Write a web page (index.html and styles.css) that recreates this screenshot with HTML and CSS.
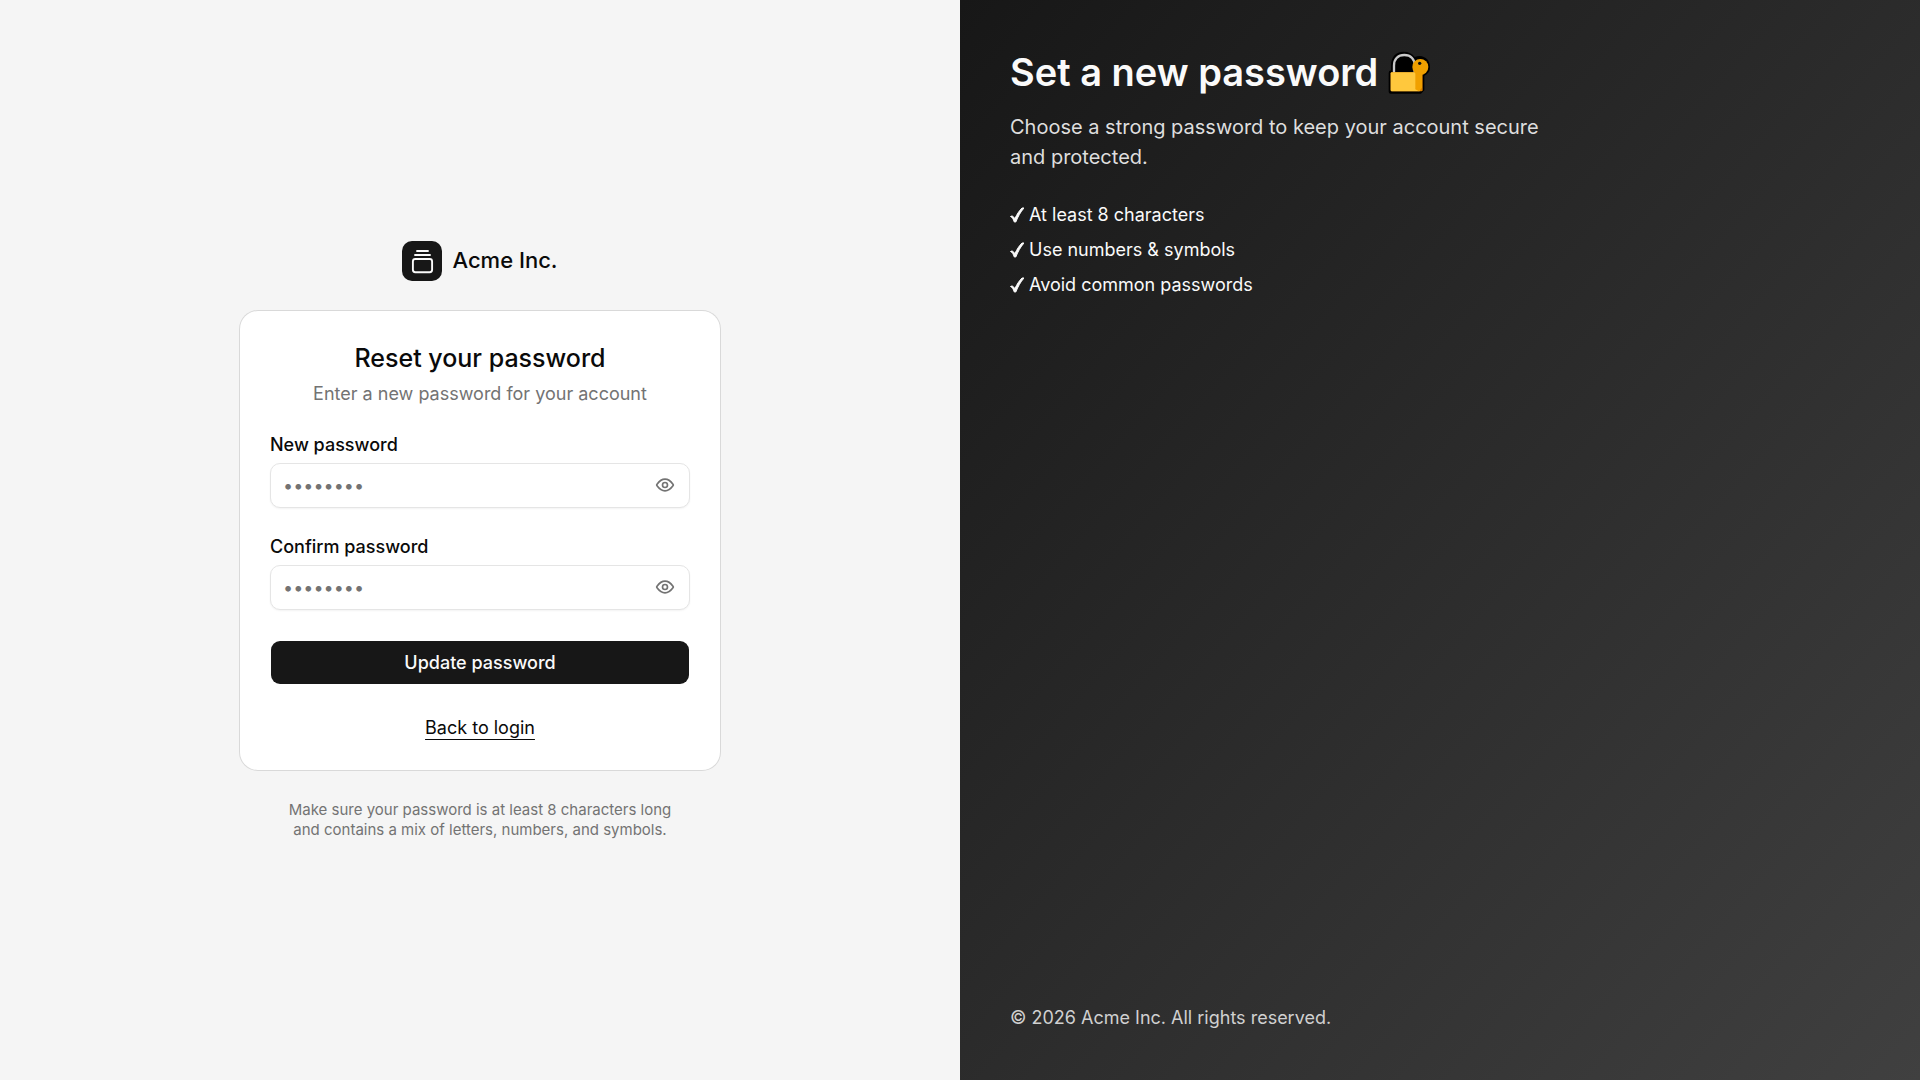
FILE: index.html
```html
<!DOCTYPE html>
<html lang="en">
<head>
    <meta charset="UTF-8">
    <meta name="viewport" content="width=device-width, initial-scale=1.0">
    <title>Reset your password - Acme Inc.</title>
    <link rel="stylesheet" href="styles.css">
</head>
<body>
    <div class="page">
        <main class="form-side">
            <div class="container">
                <a href="#" class="brand">
                    <svg class="brand-logo" viewBox="0 0 40 40" aria-hidden="true">
                        <rect width="40" height="40" rx="10" fill="#171717"/>
                        <g fill="none" stroke="#fafafa" stroke-width="1.9" stroke-linecap="round">
                            <path d="M15 10h11"/>
                            <path d="M13 14h15"/>
                            <rect x="10.9" y="18" width="19.2" height="13.2" rx="2.4"/>
                        </g>
                    </svg>
                    Acme Inc.
                </a>

                <div class="card">
                    <div class="card-header">
                        <h1>Reset your password</h1>
                        <p>Enter a new password for your account</p>
                    </div>
                    <form id="reset-form">
                        <div class="field">
                            <label for="password">New password</label>
                            <div class="input-wrap">
                                <input type="password" id="password" placeholder="••••••••">
                                <button type="button" class="toggle" aria-label="Show password">
                                    <svg viewBox="0 0 24 24" aria-hidden="true">
                                        <path d="M21.544 11.045C21.848 11.471 22 11.685 22 12C22 12.316 21.848 12.529 21.544 12.955C20.178 14.871 16.689 19 12 19C7.311 19 3.822 14.871 2.456 12.955C2.152 12.529 2 12.316 2 12C2 11.685 2.152 11.471 2.456 11.045C3.822 9.129 7.311 5 12 5C16.689 5 20.178 9.129 21.544 11.045Z"/>
                                        <circle cx="12" cy="12" r="3"/>
                                    </svg>
                                </button>
                            </div>
                        </div>
                        <div class="field">
                            <label for="confirm">Confirm password</label>
                            <div class="input-wrap">
                                <input type="password" id="confirm" placeholder="••••••••">
                                <button type="button" class="toggle" aria-label="Show password">
                                    <svg viewBox="0 0 24 24" aria-hidden="true">
                                        <path d="M21.544 11.045C21.848 11.471 22 11.685 22 12C22 12.316 21.848 12.529 21.544 12.955C20.178 14.871 16.689 19 12 19C7.311 19 3.822 14.871 2.456 12.955C2.152 12.529 2 12.316 2 12C2 11.685 2.152 11.471 2.456 11.045C3.822 9.129 7.311 5 12 5C16.689 5 20.178 9.129 21.544 11.045Z"/>
                                        <circle cx="12" cy="12" r="3"/>
                                    </svg>
                                </button>
                            </div>
                        </div>
                        <button type="submit" class="submit">Update password</button>
                        <a href="#" class="back">Back to login</a>
                    </form>
                </div>

                <p class="hint">Make sure your password is at least 8 characters long and contains a mix of letters, numbers, and symbols.</p>
            </div>
        </main>

        <aside class="info-side">
            <div>
                <h2>
                    Set a new password
                    <svg class="lock" viewBox="52 34 129 129" aria-hidden="true">
                        <path d="M54 100q0-7 7-8V78C61 50 77 36 98 36c16 0 27 6 34 16 26-10 47 8 46 31 0 13-7 20-17 25v44l-10 10H60q-6 0-6-6z" fill="#000"/>
                        <path d="M70 100V78C70 58 82 46 101 46S132 58 132 78v22" fill="none" stroke="#c8c8c8" stroke-width="7"/>
                        <rect x="60" y="98" width="96" height="57" rx="4" fill="#d67d00"/>
                        <path d="M63 98h84v57H63q-3 0-3-3v-51q0-3 3-3z" fill="#ffc83d"/>
                        <path d="M134 98h20v46l-9 11-11-6z" fill="#f0a000"/>
                        <circle cx="149" cy="82" r="24" fill="#f0a000"/>
                        <circle cx="147" cy="71" r="5" fill="#111"/>
                    </svg>
                </h2>
                <p class="lead">Choose a strong password to keep your account secure and protected.</p>
                <ul>
                    <li><svg class="check" viewBox="0 0 14 16" aria-hidden="true"><path d="M0.5 9.5C2 8.600 3.500 9 4.800 11.800C7 7 9.500 3.500 12 1L14 1C10.500 5 8 9.500 5.800 15L4.300 15C3.300 12 2.200 10.200 0.500 9.500Z"/></svg>At least 8 characters</li>
                    <li><svg class="check" viewBox="0 0 14 16" aria-hidden="true"><path d="M0.5 9.5C2 8.600 3.500 9 4.800 11.800C7 7 9.500 3.500 12 1L14 1C10.500 5 8 9.500 5.800 15L4.300 15C3.300 12 2.200 10.200 0.500 9.500Z"/></svg>Use numbers &amp; symbols</li>
                    <li><svg class="check" viewBox="0 0 14 16" aria-hidden="true"><path d="M0.5 9.5C2 8.600 3.500 9 4.800 11.800C7 7 9.500 3.500 12 1L14 1C10.500 5 8 9.500 5.800 15L4.300 15C3.300 12 2.200 10.200 0.500 9.500Z"/></svg>Avoid common passwords</li>
                </ul>
            </div>
            <p class="copyright">© 2026 Acme Inc. All rights reserved.</p>
        </aside>
    </div>
</body>
</html>
```

FILE: styles.css
```css
* {
    box-sizing: border-box;
    margin: 0;
    padding: 0;
}
body {
    font-family: Inter, 'Liberation Sans', sans-serif;
    font-size: 18px;
    line-height: 25px;
    color: #0a0a0a;
}
.page {
    display: grid;
    grid-template-columns: 1fr 1fr;
    min-height: 100vh;
}
a {
    color: inherit;
    text-decoration: none;
}
button, input {
    font: inherit;
}

/* left side */
.form-side {
    display: flex;
    align-items: center;
    justify-content: center;
    padding: 30px;
    background-color: #f5f5f5;
}
.container {
    display: flex;
    flex-direction: column;
    gap: 30px;
    width: 100%;
    max-width: 480px;
}
.brand {
    display: flex;
    align-items: center;
    align-self: center;
    gap: 10px;
    font-size: 22px;
    font-weight: 500;
}
.brand-logo {
    width: 40px;
    height: 40px;
}
.card {
    padding: 30px;
    background-color: #fff;
    border-radius: 18px;
    box-shadow: 0 0 0 1px #d9d9d9;
}
.card-header {
    margin-bottom: 30px;
    text-align: center;
}
h1 {
    margin-bottom: 5px;
    font-size: 25px;
    font-weight: 500;
    line-height: 35px;
}
.card-header p {
    color: #737373;
}
form {
    display: flex;
    flex-direction: column;
    gap: 30px;
}
.field {
    display: flex;
    flex-direction: column;
    gap: 10px;
}
label {
    font-weight: 500;
    line-height: 17px;
}
.input-wrap {
    position: relative;
}
input {
    display: block;
    width: 100%;
    height: 45px;
    padding: 0 50px 0 12px;
    border: 1px solid #e5e5e5;
    border-radius: 10px;
    background-color: #fff;
    box-shadow: 0 1px 2px rgba(0, 0, 0, 0.05);
}
input::placeholder {
    color: #737373;
}
.toggle {
    position: absolute;
    top: 0;
    right: 0;
    display: flex;
    align-items: center;
    justify-content: center;
    width: 50px;
    height: 45px;
    border: none;
    background: none;
    color: #737373;
    cursor: pointer;
}
.toggle svg {
    width: 20px;
    height: 20px;
    fill: none;
    stroke: currentColor;
    stroke-width: 2;
}
.submit {
    height: 45px;
    border: 1px solid transparent;
    border-radius: 10px;
    background-color: #171717;
    background-clip: padding-box;
    color: #fafafa;
    font-weight: 500;
    cursor: pointer;
}
.submit:hover {
    background-color: #333;
}
.back {
    align-self: center;
    text-decoration: underline;
    text-decoration-thickness: 1px;
    text-underline-offset: 5px;
}
.hint {
    padding: 0 40px;
    font-size: 15px;
    line-height: 20px;
    text-align: center;
    color: #737373;
}

/* right side */
.info-side {
    display: flex;
    flex-direction: column;
    justify-content: space-between;
    padding: 50px;
    background: linear-gradient(to bottom right, #171717, #404040);
    color: #fafafa;
}
h2 {
    display: flex;
    align-items: center;
    gap: 10px;
    margin-bottom: 17px;
    font-size: 38px;
    font-weight: 600;
    line-height: 45px;
}
.lock {
    width: 43px;
    height: 43px;
}
.lead {
    max-width: 560px;
    margin-bottom: 30px;
    font-size: 20px;
    line-height: 30px;
    color: #dedede;
}
ul {
    display: flex;
    flex-direction: column;
    gap: 10px;
    list-style: none;
}
li {
    display: flex;
    align-items: center;
    gap: 5px;
}
.check {
    width: 14px;
    height: 16px;
    fill: #fafafa;
    stroke: #fafafa;
    stroke-width: 1;
}
.copyright {
    color: #d0d0d0;
}
```
